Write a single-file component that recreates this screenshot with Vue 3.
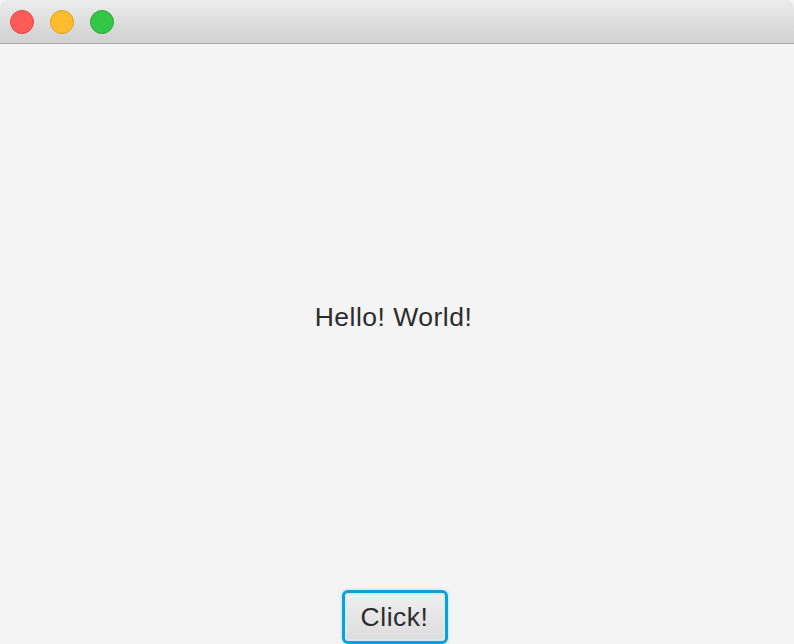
<script setup>
const title = 'Hello! World!'
</script>

<template>
  <div class="window">
    <div class="titlebar">
      <span class="light red"></span>
      <span class="light yellow"></span>
      <span class="light green"></span>
    </div>
    <div class="content">
      <div class="center">
        <span class="hello">{{ title }}</span>
      </div>
      <div class="bottom">
        <button class="click-btn" type="button">Click!</button>
      </div>
    </div>
  </div>
</template>

<style>
html, body {
  margin: 0;
  padding: 0;
  background: #f4f4f4;
}
</style>

<style scoped>
.window {
  width: 794px;
  height: 644px;
  display: flex;
  flex-direction: column;
  overflow: hidden;
  background: #f4f4f4;
  font-family: "Liberation Sans", Arial, sans-serif;
}

.titlebar {
  height: 44px;
  flex-shrink: 0;
  display: flex;
  align-items: center;
  gap: 16px;
  padding: 0 0 0 10px;
  box-sizing: border-box;
  background: linear-gradient(#ececec, #d0d0d0);
  border-bottom: 1px solid #a9a9a9;
  border-top-left-radius: 8px;
  border-top-right-radius: 8px;
}

.light {
  width: 24px;
  height: 24px;
  border-radius: 50%;
  box-sizing: border-box;
  border: 1px solid;
}

.red {
  background: #fc5b57;
  border-color: #e2463f;
}

.yellow {
  background: #ffbd2e;
  border-color: #e1a116;
}

.green {
  background: #33c748;
  border-color: #27aa35;
}

.content {
  flex: 1;
  display: flex;
  flex-direction: column;
  min-height: 0;
}

.center {
  flex: 1;
  display: flex;
  align-items: center;
  justify-content: center;
  padding-right: 7px;
}

.hello {
  font-size: 26.5px;
  letter-spacing: 0.5px;
  color: #2c2c2c;
}

.bottom {
  display: flex;
  justify-content: center;
  height: 54px;
  padding-right: 5px;
}

.click-btn {
  width: 106px;
  height: 54px;
  box-sizing: border-box;
  padding: 0;
  border: 3px solid #0aa0d8;
  border-radius: 6px;
  box-shadow: 0 0 3px 1px #c4e6f2, inset 0 0 0 2px #d8e9f0;
  background: linear-gradient(#f0f0f0, #dcdcdc);
  color: #2c2c2c;
  font-family: "Liberation Sans", Arial, sans-serif;
  font-size: 26.5px;
  letter-spacing: 0.5px;
}
</style>
